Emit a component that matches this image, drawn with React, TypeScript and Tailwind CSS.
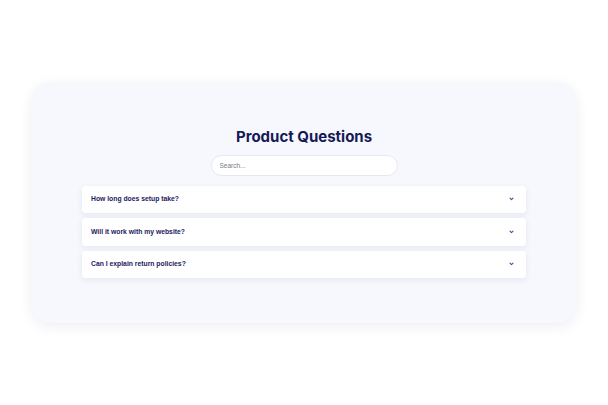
import React from 'react'

const questions = [
  'How long does setup take?',
  'Will it work with my website?',
  'Can I explain return policies?',
]

function Chevron() {
  return (
    <svg width="5" height="4" viewBox="0 0 5 4" fill="none">
      <path d="M1 1.2l1.5 1.5 1.5-1.5" stroke="#4b4f85" strokeWidth="1.1" strokeLinecap="round" strokeLinejoin="round" />
    </svg>
  )
}

export default function App() {
  return (
    <div className="flex h-[405px] w-[608px] items-center justify-center bg-white">
      <div className="flex h-[240px] w-[544px] flex-col items-center rounded-[18px] bg-[#f7f8fd] px-[50px] pt-[44px] shadow-[0_3px_14px_rgba(30,40,90,0.08)]">
        <h1 className="h-[19px] text-[15px] font-bold leading-[19px] text-[#151a56] [font-family:Inter,'Noto_Sans',sans-serif]">
          Product Questions
        </h1>
        <input
          className="mt-[9px] h-[21px] w-[187px] rounded-full border border-[#e6e8f1] bg-white px-[8px] text-[6.5px] text-[#666] outline-none placeholder:text-[#7a7a7a] [font-family:'Liberation_Sans',Arial,sans-serif]"
          placeholder="Search..."
        />
        <div className="mt-[10px] flex w-full flex-col gap-[5px]">
          {questions.map((q) => (
            <div
              key={q}
              className="flex h-[27.5px] items-center justify-between rounded-[4px] bg-white pl-[9px] pr-[12px] shadow-[0_2px_6px_rgba(40,50,110,0.09)]"
            >
              <span className="text-[6.8px] font-bold text-[#1c2060] [font-family:'Liberation_Sans',Arial,sans-serif]">
                {q}
              </span>
              <Chevron />
            </div>
          ))}
        </div>
      </div>
    </div>
  )
}
